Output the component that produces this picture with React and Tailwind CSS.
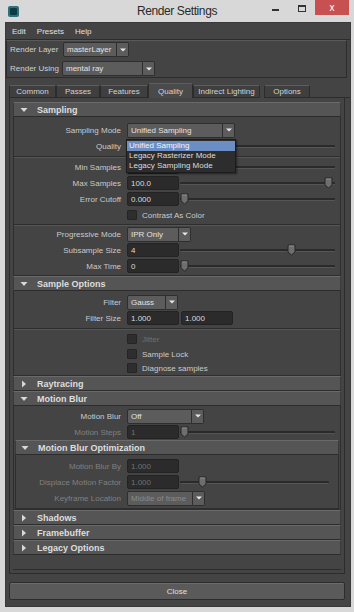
import React from "react";

const F = { fontFamily: '"Liberation Sans", Arial, sans-serif' };

function Tri({ open }) {
  return open ? (
    <svg width="8" height="6" viewBox="0 0 8 6" className="shrink-0">
      <path d="M0.5 1 L7.5 1 L4 5 Z" fill="#d8d8d8" />
    </svg>
  ) : (
    <svg width="6" height="8" viewBox="0 0 6 8" className="shrink-0">
      <path d="M1 0.5 L5 4 L1 7.5 Z" fill="#d8d8d8" />
    </svg>
  );
}

function Header({ title, open, inset }) {
  return (
    <div
      className={`flex items-center h-[15px] shrink-0 bg-[#555555] border-t border-t-[#6a6a6a] border-b border-b-[#2c2c2c] border-x border-x-[#3a3a3a] gap-[9px] ${inset ? "pl-[5px]" : "pl-[6px]"}`}
    >
      <div className="w-[8px] flex justify-center">
        <Tri open={open} />
      </div>
      <span className="text-[9px] font-bold text-[#dedede] leading-none whitespace-nowrap pt-[1px]">{title}</span>
    </div>
  );
}

function Arrow() {
  return (
    <svg width="6" height="4" viewBox="0 0 6 4">
      <path d="M0 0.5 L6 0.5 L3 3.5 Z" fill="#e8e8e8" />
    </svg>
  );
}

function Dropdown({ value, w, disabled }) {
  return (
    <div className={`flex h-[15px] ${w} shrink-0`}>
      <div
        className={`flex-1 min-w-0 overflow-hidden whitespace-nowrap flex items-center pl-[3px] pt-[1px] bg-[#5c5c5c] border border-[#2e2e2e] rounded-l-[2px] text-[8px] leading-none ${disabled ? "text-[#8a8a8a]" : "text-[#e2e2e2]"}`}
      >
        {value}
      </div>
      <div className="w-[12px] shrink-0 flex items-center justify-center bg-[#5c5c5c] border border-l-0 border-[#2e2e2e] rounded-r-[2px]">
        <Arrow />
      </div>
    </div>
  );
}

function Field({ value, w = "w-[52px]", disabled }) {
  return (
    <div
      className={`flex items-center h-[14px] ${w} shrink-0 pl-[3px] pt-[1px] bg-[#2b2b2b] border border-[#232323] rounded-[2px] text-[8px] leading-none whitespace-nowrap ${disabled ? "text-[#707070]" : "text-[#dadada]"}`}
    >
      {value}
    </div>
  );
}

function Thumb() {
  return (
    <svg width="9" height="12" viewBox="0 0 9 12">
      <path d="M1 1 L8 1 L8 8 L4.5 11 L1 8 Z" fill="#6e6e6e" stroke="#262626" strokeWidth="1" />
      <path d="M2 2 L7 2" stroke="#8a8a8a" strokeWidth="1" />
    </svg>
  );
}

function Slider({ pos, end = "mr-[5px]" }) {
  return (
    <div className={`relative flex-1 h-full flex items-center ${end}`}>
      <div className="w-full h-[3px] bg-[#2a2a2a] border-b border-b-[#555] rounded-[1px]" />
      <div className="absolute top-[2px]" style={{ left: pos }}>
        <Thumb />
      </div>
    </div>
  );
}

function Row({ label, h = "h-[16px]", lw = "w-[107px]", disabled, children }) {
  return (
    <div className={`flex items-center ${h} shrink-0`}>
      <div
        className={`${lw} shrink-0 text-right text-[8px] leading-none whitespace-nowrap pt-[2px] ${disabled ? "text-[#808080]" : "text-[#cacaca]"}`}
      >
        {label}
      </div>
      <div className="flex items-center flex-1 h-full pl-[6px] gap-[1px]">{children}</div>
    </div>
  );
}

function Check({ label, disabled }) {
  return (
    <div className="flex items-center gap-[5px]">
      <div className="w-[10px] h-[10px] bg-[#2e2e2e] border border-[#242424] rounded-[1px]" />
      <span className={`text-[8px] leading-none whitespace-nowrap pt-[2px] ${disabled ? "text-[#707070]" : "text-[#cacaca]"}`}>{label}</span>
    </div>
  );
}

function Sep({ h = "h-[4px]" }) {
  return (
    <div className={`${h} shrink-0 flex flex-col justify-center`}>
      <div className="h-[2px] border-t border-t-[#2e2e2e] border-b border-b-[#555]" />
    </div>
  );
}

function Body({ children, cls = "" }) {
  return (
    <div className={`flex flex-col border-x border-x-[#2e2e2e] border-b border-b-[#2e2e2e] ${cls}`}>{children}</div>
  );
}

export default function App() {
  const tabs = [
    ["Common", "w-[47px]"],
    ["Passes", "w-[44px]"],
    ["Features", "w-[48px]"],
    ["Quality", "w-[45px]"],
    ["Indirect Lighting", "w-[67px]"],
    ["Options", "w-[46px]"],
  ];
  return (
    <div style={F} className="w-[354px] h-[612px] bg-[#d8d8d8] flex flex-col overflow-hidden select-none">
      {/* Title bar */}
      <div className="h-[22px] shrink-0 flex items-center relative">
        <div className="ml-[8px] w-[11px] h-[11px] bg-[#2e6f7a] rounded-[2px] flex items-center justify-center">
          <div className="w-[7px] h-[7px] bg-[#0c3a44] rounded-[1px]" />
        </div>
        <div className="flex-1 text-center text-[12px] tracking-[-0.4px] text-[#2a2a2a] pl-[73px] whitespace-nowrap">Render Settings</div>
        <div className="flex items-start self-start h-[16px] mr-[5px]">
          <div className="w-[27px] h-[16px] flex items-center justify-center">
            <div className="w-[7px] h-[2px] bg-[#333] mt-[3px]" />
          </div>
          <div className="w-[26px] h-[16px] flex items-center justify-center">
            <div className="w-[8px] h-[7px] border border-[#333] border-t-2" />
          </div>
          <div className="w-[34px] h-[15px] bg-[#c75050] flex items-center justify-center text-white text-[10px] leading-none">
            x
          </div>
        </div>
      </div>

      {/* Dark body */}
      <div className="flex-1 ml-[5px] mr-[3px] mb-[5px] bg-[#444444] flex flex-col border border-[#3a3a3a]">
        {/* Menu */}
        <div className="h-[17px] shrink-0 flex items-center gap-[11px] pl-[6px] pt-[1px] text-[8px] text-[#e0e0e0] border-b border-b-[#2c2c2c]">
          <span>Edit</span>
          <span>Presets</span>
          <span>Help</span>
        </div>
        {/* Render layer box */}
        <div className="h-[38px] shrink-0 border border-[#2c2c2c] border-t-[#5a5a5a] flex flex-col justify-center gap-[3px] pl-[3px] mr-[3px]">
          <div className="flex items-center gap-[2px] h-[16px]">
            <span className="text-[8px] text-[#d0d0d0] w-[51px] whitespace-nowrap pt-[1px]">Render Layer</span>
            <Dropdown value="masterLayer" w="w-[66px]" />
          </div>
          <div className="flex items-center gap-[2px] h-[16px]">
            <span className="text-[8px] text-[#d0d0d0] w-[50px] whitespace-nowrap pt-[1px]">Render Using</span>
            <Dropdown value="mental ray" w="w-[93px]" />
          </div>
        </div>

        {/* Tabs */}
        <div className="mt-[6px] h-[14px] shrink-0 flex items-end pl-[3px]">
          {tabs.map(([t, w]) => {
            const sel = t === "Quality";
            return (
              <div
                key={t}
                className={`${w} ${sel ? "h-[15px] bg-[#4a4a4a] border-b-0" : "h-[13px] bg-[#3f3f3f] border-b border-b-[#2c2c2c]"} ${t === "Options" ? "ml-[4px]" : ""} shrink-0 flex items-center justify-center pt-[1px] text-[8px] leading-none whitespace-nowrap text-[#d2d2d2] border-t border-x border-t-[#5e5e5e] border-x-[#2c2c2c] rounded-t-[2px]`}
              >
                {t}
              </div>
            );
          })}
          <div className="flex-1 border-b border-b-[#2c2c2c]" />
        </div>

        {/* Tab panel */}
        <div className="h-[476px] shrink-0 ml-[3px] mr-[5px] border border-[#2c2c2c] border-t-0 bg-[#444] flex flex-col px-[3px] pt-[4px]">
          <div className="flex flex-col h-[468px] border-b border-b-[#2c2c2c]">
            {/* Sampling */}
            <Header title="Sampling" open />
            <Body cls="pt-[5px] pb-[1px]">
              <Row label="Sampling Mode">
                <div className="relative">
                  <Dropdown value="Unified Sampling" w="w-[108px]" />
                  <div className="absolute left-[-1px] top-[16px] w-[110px] bg-[#2d2d2d] border border-[#1c1c1c] flex flex-col py-[1px] z-10 shadow-[1px_1px_2px_rgba(0,0,0,0.5)]">
                    <div className="h-[10px] flex items-center pl-[2px] pt-[1px] bg-[#6b8fc4] text-[8px] leading-none whitespace-nowrap text-[#f4f4f4]">Unified Sampling</div>
                    <div className="h-[10px] flex items-center pl-[2px] pt-[1px] text-[8px] leading-none whitespace-nowrap text-[#dcdcdc]">Legacy Rasterizer Mode</div>
                    <div className="h-[10px] flex items-center pl-[2px] pt-[1px] text-[8px] leading-none whitespace-nowrap text-[#dcdcdc]">Legacy Sampling Mode</div>
                  </div>
                </div>
              </Row>
              <Row label="Quality">
                <Field value="" />
                <Slider pos={0} />
              </Row>
              <Sep h="h-[5px]" />
              <Row label="Min Samples">
                <Field value="" />
                <Slider pos={12} />
              </Row>
              <Row label="Max Samples">
                <Field value="100.0" />
                <Slider pos={144} />
              </Row>
              <Row label="Error Cutoff">
                <Field value="0.000" />
                <Slider pos={0} />
              </Row>
              <Row label="">
                <Check label="Contrast As Color" />
              </Row>
              <Sep h="h-[3px]" />
              <Row label="Progressive Mode">
                <Dropdown value="IPR Only" w="w-[64px]" />
              </Row>
              <Row label="Subsample Size">
                <Field value="4" />
                <Slider pos={107} />
              </Row>
              <Row label="Max Time">
                <Field value="0" />
                <Slider pos={0} />
              </Row>
            </Body>

            {/* Sample Options */}
            <Header title="Sample Options" open />
            <Body cls="pt-[3px]">
              <Row label="Filter">
                <Dropdown value="Gauss" w="w-[51px]" />
              </Row>
              <Row label="Filter Size">
                <div className="flex gap-[2px]">
                  <Field value="1.000" />
                  <Field value="1.000" />
                </div>
              </Row>
              <Sep h="h-[5px]" />
              <Row label="" h="h-[15px]">
                <Check label="Jitter" disabled />
              </Row>
              <Row label="" h="h-[15px]">
                <Check label="Sample Lock" />
              </Row>
              <Row label="" h="h-[14px]">
                <Check label="Diagnose samples" />
              </Row>
            </Body>

            <Header title="Raytracing" />
            <Header title="Motion Blur" open />
            <Body cls="pt-[2px]">
              <Row label="Motion Blur">
                <Dropdown value="Off" w="w-[77px]" />
              </Row>
              <Row label="Motion Steps" disabled>
                <Field value="1" disabled />
                <Slider pos={0} />
              </Row>
              <div className="mx-[1px] flex flex-col">
                <Header title="Motion Blur Optimization" open inset />
                <Body cls="pt-[3px] pb-[2px]">
                  <Row label="Motion Blur By" lw="w-[105px]" disabled>
                    <Field value="1.000" disabled />
                  </Row>
                  <Row label="Displace Motion Factor" lw="w-[105px]" disabled>
                    <Field value="1.000" disabled />
                    <Slider pos={18} end="mr-[9px]" />
                  </Row>
                  <Row label="Keyframe Location" lw="w-[105px]" disabled>
                    <Dropdown value="Middle of frame" w="w-[78px]" disabled />
                  </Row>
                </Body>
              </div>
            </Body>
            <Header title="Shadows" />
            <Header title="Framebuffer" />
            <Header title="Legacy Options" />
          </div>
        </div>

        {/* Close */}
        <div className="flex-1 flex items-center px-[3px] pr-[5px] pt-[2px]">
          <div className="w-full h-[18px] bg-[#5a5a5a] border border-[#2c2c2c] rounded-[2px] flex items-center justify-center pt-[1px] text-[8px] text-[#e0e0e0] shadow-[inset_0_1px_0_#6c6c6c]">
            Close
          </div>
        </div>
      </div>
    </div>
  );
}
